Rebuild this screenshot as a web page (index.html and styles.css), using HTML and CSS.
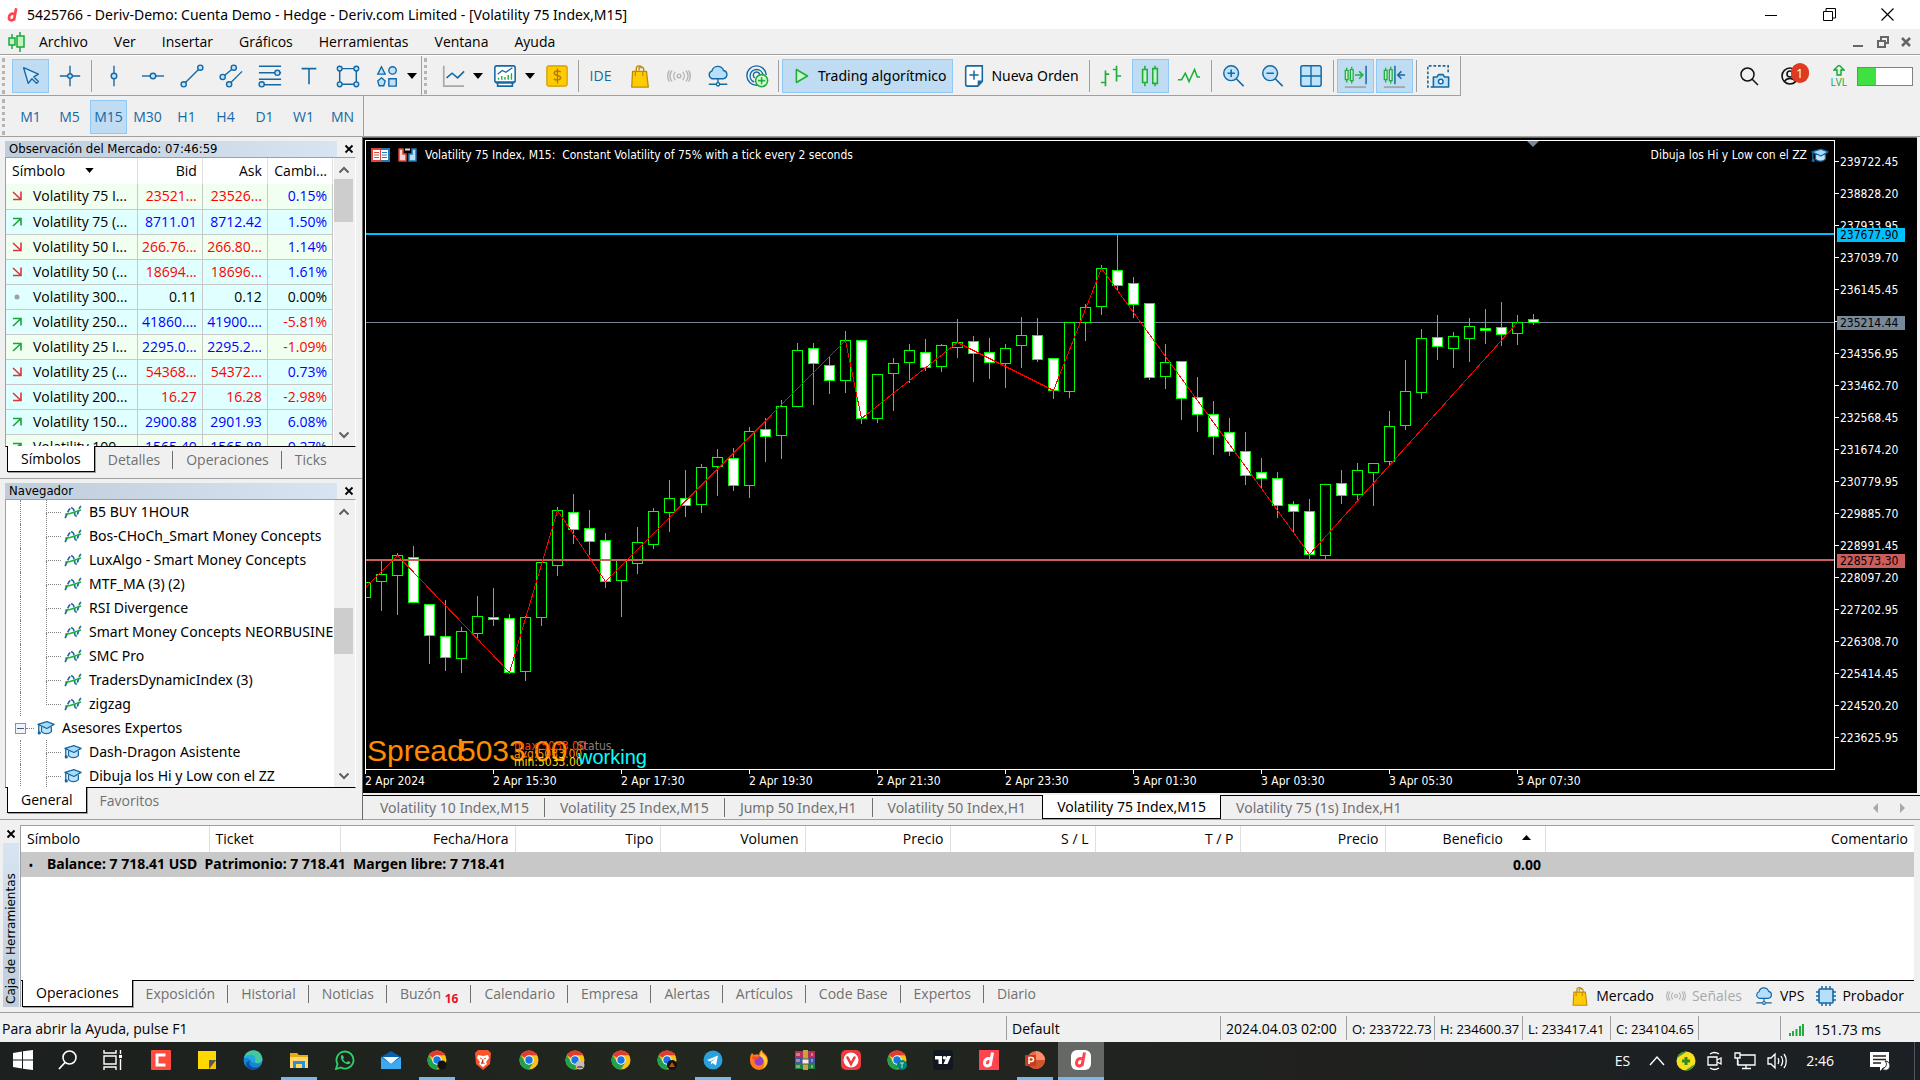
FILE: index.html
```html
<!DOCTYPE html>
<html lang="es">
<head>
    <meta charset="UTF-8">
    <meta name="viewport" content="width=device-width, initial-scale=1.0">
    <title>5425766 - Deriv-Demo: Cuenta Demo - Hedge - Deriv.com Limited</title>
    <link rel="stylesheet" href="styles.css">
</head>
<body>
    <!-- shared icons -->
    <svg class="defs" width="0" height="0" aria-hidden="true">
        <symbol id="up" viewBox="0 0 10 10"><path d="M1 1.5h8v7M9 1.5L1 9" fill="none" stroke="#17a63a" stroke-width="1.6"/></symbol>
        <symbol id="down" viewBox="0 0 10 10"><path d="M1 8.5h8v-8M1 1l8 7.5" fill="none" stroke="#d9383a" stroke-width="1.6"/></symbol>
        <symbol id="flat" viewBox="0 0 10 10"><circle cx="5" cy="5" r="2.5" fill="#a0a0a0"/></symbol>
        <symbol id="caret" viewBox="0 0 10 6"><path d="M0 0h10L5 6z" fill="#000"/></symbol>
        <symbol id="close" viewBox="0 0 10 10"><path d="M1.5 1.5l7 7M8.5 1.5l-7 7" stroke="#000" stroke-width="1.8"/></symbol>
        <symbol id="chev-up" viewBox="0 0 12 8"><path d="M1.5 6.5L6 2l4.500 4.500" fill="none" stroke="#606060" stroke-width="2"/></symbol>
        <symbol id="chev-down" viewBox="0 0 12 8"><path d="M1.500 1.500L6 6l4.500-4.500" fill="none" stroke="#606060" stroke-width="2"/></symbol>
        <symbol id="wave" viewBox="0 0 18 14">
            <path d="M1 13C4 8 5 2 8 3s2 8 4 8 2-7 5-10" fill="none" stroke="#1c6aa8" stroke-width="1.700" stroke-dasharray="5 1"/>
            <path d="M1 9.500l5-1 5-1.500 6-2" fill="none" stroke="#1fae3c" stroke-width="1.600"/>
        </symbol>
        <symbol id="cap" viewBox="0 0 20 16">
            <path d="M5 7v5c3 3 8 3 11 0V7" fill="#bfe3fa" stroke="#1468a4" stroke-width="1.400"/>
            <path d="M1 4l10-3 8 3-8 4.500z" fill="#a8dbfa" stroke="#1468a4" stroke-width="1.400" stroke-linejoin="round"/>
            <path d="M2 4.500V13" stroke="#1468a4" stroke-width="1.500"/><circle cx="2.500" cy="13.500" r="1.800" fill="#1468a4"/>
        </symbol>
        <symbol id="bag" viewBox="0 0 26 26">
            <path d="M9 12V5a3 3 0 0 1 6 0M12 7V4a3 3 0 0 1 5 1v7" fill="none" stroke="#c48a00" stroke-width="1.500"/>
            <path d="M5 8h15l2 17H4z" fill="#ffcb05" stroke="#c48a00" stroke-width="1.400" stroke-linejoin="round"/>
            <path d="M8 8v5M16 8v5" stroke="#c48a00" stroke-width="1.300"/>
        </symbol>
        <symbol id="signal" viewBox="0 0 26 26">
            <g fill="none" stroke="#b4b4b4" stroke-width="1.500"><circle cx="13" cy="13" r="2"/><path d="M9 8.500a7 7 0 0 0 0 9M17 8.500a7 7 0 0 1 0 9M5.500 7a9 9 0 0 0 0 12M20.500 7a9 9 0 0 1 0 12M2.500 7a12 12 0 0 0 0 12M23.500 7a12 12 0 0 1 0 12"/></g>
        </symbol>
        <symbol id="cloud" viewBox="0 0 26 26">
            <path d="M6.500 16a4.500 4.500 0 0 1 0-8.500 6.500 6.500 0 0 1 12.500-.5A4.600 4.600 0 0 1 19 16z" fill="#b5dffa" stroke="#1468a4" stroke-width="1.500"/>
            <path d="M13 16v5M3 22h8M15 22h8" stroke="#1468a4" stroke-width="1.500"/><circle cx="13" cy="22" r="1.800" fill="#f0f0f0" stroke="#1468a4" stroke-width="1.500"/>
        </symbol>
        <symbol id="chrome" viewBox="0 0 20 20">
            <circle cx="10" cy="10" r="9.500" fill="#fbc116"/>
            <path d="M10 10L1.800 5.200A9.500 9.500 0 0 1 18.200 5.200H10z" fill="#e33b2e"/>
            <path d="M1.800 5.200A9.500 9.500 0 0 0 10 19.500l4.100-7.100L10 10 6 12z" fill="#21a050"/>
            <circle cx="10" cy="10" r="4.700" fill="#fff"/><circle cx="10" cy="10" r="3.700" fill="#1a73e8"/>
        </symbol>
        <symbol id="deriv" viewBox="0 0 20 20">
            <path d="M13.500 2.500L11 16M11.500 9C8 7.500 5.500 10 5.500 13s3.500 4 5.500 1.500" fill="none" stroke="currentColor" stroke-width="3"/>
        </symbol>
    </svg>

    <header class="titlebar">
        <svg class="app-logo" width="18" height="18"><use href="#deriv"/></svg>
        <h1>5425766 - Deriv-Demo: Cuenta Demo - Hedge - Deriv.com Limited - [Volatility 75 Index,M15]</h1>
        <button class="win" aria-label="Minimizar"><svg width="12" height="12"><path d="M0 6.500h12" stroke="#000"/></svg></button>
        <button class="win" aria-label="Restaurar"><svg width="13" height="13"><path d="M.5 3.500h9v9h-9zM3 3V.5h9.500V10H10" fill="none" stroke="#000"/></svg></button>
        <button class="win" aria-label="Cerrar"><svg width="13" height="13"><path d="M.5.5l12 12M12.500.5l-12 12" stroke="#000" stroke-width="1.200"/></svg></button>
    </header>

    <nav class="menubar">
        <svg class="menu-logo" width="18" height="20"><g fill="#bff5c0" stroke="#1ba83a" stroke-width="1.500"><path d="M5 2v15M13 0v20"/><path d="M2 6h6v7H2zM10 4h7v11h-7z"/></g></svg>
        <button>Archivo</button><button>Ver</button><button>Insertar</button><button>Gráficos</button><button>Herramientas</button><button>Ventana</button><button>Ayuda</button>
        <span class="grow"></span>
        <button class="mdi" aria-label="Minimizar gráfico"><svg width="10" height="12"><path d="M0 10h10" stroke="#666" stroke-width="2"/></svg></button>
        <button class="mdi" aria-label="Restaurar gráfico"><svg width="12" height="12"><path d="M1 5h7v6H1zM4 4V1h7v6H8" fill="none" stroke="#666" stroke-width="2"/></svg></button>
        <button class="mdi" aria-label="Cerrar gráfico"><svg width="10" height="10"><path d="M1 1l8 8M9 1L1 9" stroke="#666" stroke-width="2.500"/></svg></button>
    </nav>

    <div class="toolbar">
        <div class="tools">
            <span class="grip"></span>
            <button class="tool on" aria-label="Cursor"><svg viewBox="0 0 26 26"><path d="M5 4l5 17 4-5 5 5 2-2-5-5 5-3z" fill="#cfe9fb" stroke="#1468a4" stroke-width="1.500" stroke-linejoin="round"/></svg></button>
            <button class="tool" aria-label="Cruz"><svg viewBox="0 0 26 26"><path d="M13 2v22M2 13h22" stroke="#1468a4" stroke-width="1.500"/><circle cx="13" cy="13" r="2.500" fill="#bfe3fa" stroke="#1468a4" stroke-width="1.500"/></svg></button>
            <i class="sep"></i>
            <button class="tool" aria-label="Línea vertical"><svg viewBox="0 0 26 26"><path d="M13 2v22" stroke="#1468a4" stroke-width="1.500"/><circle cx="13" cy="13" r="3" fill="#bfe3fa" stroke="#1468a4" stroke-width="1.500"/></svg></button>
            <button class="tool" aria-label="Línea horizontal"><svg viewBox="0 0 26 26"><path d="M1 13h24" stroke="#1468a4" stroke-width="1.500"/><circle cx="13" cy="13" r="3" fill="#bfe3fa" stroke="#1468a4" stroke-width="1.500"/></svg></button>
            <button class="tool" aria-label="Línea de tendencia"><svg viewBox="0 0 26 26"><path d="M4 22L22 4" stroke="#1468a4" stroke-width="1.500"/><g fill="#bfe3fa" stroke="#1468a4" stroke-width="1.500"><circle cx="4" cy="22" r="2.800"/><circle cx="22" cy="4" r="2.800"/></g></svg></button>
            <button class="tool" aria-label="Canal"><svg viewBox="0 0 26 26"><path d="M4 14L16 4M11 22L25 8" stroke="#1468a4" stroke-width="1.500"/><g fill="#bfe3fa" stroke="#1468a4" stroke-width="1.500"><circle cx="4" cy="14" r="2.800"/><circle cx="16" cy="4" r="2.800"/><circle cx="11" cy="22" r="2.800"/></g></svg></button>
            <button class="tool" aria-label="Fibonacci"><svg viewBox="0 0 26 26"><path d="M1 2.500h24M1 9.500h24M1 16.500h24M1 22.500h24" stroke="#1468a4" stroke-width="1.500"/><g fill="#bfe3fa" stroke="#1468a4" stroke-width="1.500"><circle cx="21" cy="9.500" r="2.800"/><circle cx="4" cy="22" r="2.800"/></g></svg></button>
            <button class="tool" aria-label="Texto"><svg viewBox="0 0 26 26"><path d="M5 5h16M13 5v17" stroke="#1468a4" stroke-width="1.700"/></svg></button>
            <button class="tool" aria-label="Rectángulo"><svg viewBox="0 0 26 26"><path d="M4 5h18v17H4z" fill="none" stroke="#1468a4" stroke-width="1.600"/><g fill="#bfe3fa" stroke="#1468a4" stroke-width="1.500"><circle cx="4" cy="5" r="2.600"/><circle cx="22" cy="5" r="2.600"/><circle cx="4" cy="22" r="2.600"/><circle cx="22" cy="22" r="2.600"/></g></svg></button>
            <button class="tool" aria-label="Objetos"><svg viewBox="0 0 26 26"><g fill="#bfe3fa" stroke="#1468a4" stroke-width="1.500"><path d="M7 3l4 8H3zM7 15l4 3.500-1.500 5h-5L3 18.500z"/><circle cx="19" cy="7" r="4"/><path d="M15 16h8v8h-8z"/></g></svg></button>
            <button class="drop" aria-label="Más objetos"><svg width="10" height="6"><use href="#caret"/></svg></button>
        </div>
        <div class="tools">
            <span class="grip"></span>
            <button class="tool" aria-label="Gráfico nuevo"><svg viewBox="0 0 26 26"><path d="M3 2v22h22" fill="none" stroke="#a8a8a8" stroke-width="1.800"/><path d="M6 15l6-5 6 5 7-7" fill="none" stroke="#1468a4" stroke-width="1.700"/></svg></button>
            <button class="drop" aria-label="Lista de gráficos"><svg width="10" height="6"><use href="#caret"/></svg></button>
            <button class="tool" aria-label="Plantillas"><svg viewBox="0 0 26 26"><path d="M5 20v4h16v-4" fill="#fff" stroke="#1468a4" stroke-width="1.700"/><rect x="2" y="2" width="22" height="18" rx="2" fill="#fff" stroke="#1468a4" stroke-width="1.700"/><path d="M3 20h20" stroke="#1468a4" stroke-width="2.500"/><path d="M5 11l5-4 4 2 7-5" fill="none" stroke="#1468a4" stroke-width="1.400"/><path d="M6 17v-2M9.500 17v-4M13 17v-3M16.500 17v-5M20 17v-7" stroke="#1fae3c" stroke-width="1.500"/></svg></button>
            <button class="drop" aria-label="Lista de plantillas"><svg width="10" height="6"><use href="#caret"/></svg></button>
            <button class="tool" aria-label="Depósito"><svg viewBox="0 0 26 26"><rect x="2" y="2" width="22" height="22" rx="2" fill="#ffcb05" stroke="#d19a00" stroke-width="1.300"/><path d="M17 9c-1-2-7-2-7 1s7 2 7 5-6 3-7.500 1M13.500 5v16" fill="none" stroke="#b77d00" stroke-width="1.500"/></svg></button>
            <i class="sep"></i>
            <button class="tool ide">IDE</button>
            <button class="tool" aria-label="Mercado"><svg viewBox="0 0 26 26"><use href="#bag"/></svg></button>
            <button class="tool" aria-label="Señales"><svg viewBox="0 0 26 26"><use href="#signal"/></svg></button>
            <button class="tool" aria-label="VPS"><svg viewBox="0 0 26 26"><use href="#cloud"/></svg></button>
            <button class="tool" aria-label="Copiar"><svg viewBox="0 0 26 26"><g fill="none" stroke="#1468a4" stroke-width="1.500"><path d="M13 23A10.500 10.500 0 1 1 23 12"/><path d="M10 19.500A7 7 0 1 1 19.500 12M10.500 15A3.500 3.500 0 1 1 16 12"/></g><circle cx="18" cy="18" r="6.500" fill="#dcffdc" stroke="#1fae3c" stroke-width="1.700"/><path d="M18 14v8M14 18h8" stroke="#1fae3c" stroke-width="1.700"/></svg></button>
            <i class="sep"></i>
            <button class="tool wide on"><svg viewBox="0 0 26 26"><path d="M8 6l12 7-12 7z" fill="#c8f7cd" stroke="#1fae3c" stroke-width="1.700" stroke-linejoin="round"/></svg>Trading algorítmico</button>
            <button class="tool wide"><svg viewBox="0 0 26 26"><path d="M6 2h16v17l-5 5H6a2 2 0 0 1-2-2V4a2 2 0 0 1 2-2z" fill="#fff" stroke="#1468a4" stroke-width="1.700"/><path d="M22 18h-5v6z" fill="#1468a4"/><path d="M13 7v10M8 12h10" stroke="#1468a4" stroke-width="1.600"/></svg>Nueva Orden</button>
            <i class="sep"></i>
            <button class="tool" aria-label="Barras"><svg viewBox="0 0 26 26"><path d="M7 7v17M2 20h5M7 11h4M19 2v17M15 6h4M19 13h5" stroke="#1fae3c" stroke-width="1.800"/></svg></button>
            <button class="tool on" aria-label="Velas"><svg viewBox="0 0 26 26"><path d="M7.500 2v22M18.500 2v22" stroke="#1fae3c" stroke-width="1.700"/><path d="M5 6h5v14H5zM16 5h5v16h-5z" fill="#c8f7cd" stroke="#1fae3c" stroke-width="1.700"/></svg></button>
            <button class="tool" aria-label="Línea"><svg viewBox="0 0 26 26"><path d="M1 17h4l4-7 4 9 6-13 3 8h3" fill="none" stroke="#1fae3c" stroke-width="1.700"/></svg></button>
            <i class="sep"></i>
            <button class="tool" aria-label="Acercar"><svg viewBox="0 0 26 26"><circle cx="11" cy="10" r="8" fill="#bfe3fa" stroke="#1468a4" stroke-width="1.600"/><path d="M16.500 16l8 8M7 10h8M11 6v8" stroke="#1468a4" stroke-width="1.700"/></svg></button>
            <button class="tool" aria-label="Alejar"><svg viewBox="0 0 26 26"><circle cx="11" cy="10" r="8" fill="#bfe3fa" stroke="#1468a4" stroke-width="1.600"/><path d="M16.500 16l8 8M7 10h8" stroke="#1468a4" stroke-width="1.700"/></svg></button>
            <button class="tool" aria-label="Mosaico"><svg viewBox="0 0 26 26"><rect x="2" y="2" width="22" height="22" rx="2" fill="#bfe3fa" stroke="#1468a4" stroke-width="1.600"/><path d="M13 2v22M2 13h22" stroke="#1468a4" stroke-width="1.500"/></svg></button>
            <i class="sep"></i>
            <button class="tool on" aria-label="Desplazar al final"><svg viewBox="0 0 26 26"><path d="M4 4v16M9.500 3v18" stroke="#1fae3c" stroke-width="1.400"/><path d="M2.500 7h3v10h-3zM8 6h3v12H8z" fill="#c8f7cd" stroke="#1fae3c" stroke-width="1.400"/><path d="M13 12h8M17.500 8l4 4-4 4" fill="none" stroke="#1fae3c" stroke-width="1.600"/><path d="M25 2v20" stroke="#1468a4" stroke-width="1.600"/><path d="M2 25h23" stroke="#999" stroke-width="1.500"/></svg></button>
            <button class="tool on" aria-label="Desplazamiento"><svg viewBox="0 0 26 26"><path d="M4 4v16M9.500 3v18" stroke="#1fae3c" stroke-width="1.400"/><path d="M2.500 7h3v10h-3zM8 6h3v12H8z" fill="#c8f7cd" stroke="#1fae3c" stroke-width="1.400"/><path d="M14 2v20M17 12h8M21 8l-4 4 4 4" fill="none" stroke="#1468a4" stroke-width="1.600"/><path d="M2 25h23" stroke="#999" stroke-width="1.500"/></svg></button>
            <i class="sep"></i>
            <button class="tool" aria-label="Captura"><svg viewBox="0 0 26 26"><path d="M8 25H2V2h22v9" fill="none" stroke="#1468a4" stroke-width="1.700" stroke-dasharray="3 2"/><path d="M8 14h4l1.500-2.500h5L20 14h4.500v11H8z" fill="#bfe3fa" stroke="#1468a4" stroke-width="1.700" stroke-linejoin="round"/><circle cx="16" cy="19" r="2.500" fill="#fff" stroke="#1468a4" stroke-width="1.600"/></svg></button>
        </div>
        <span class="grow"></span>
        <div class="account">
            <button aria-label="Buscar"><svg width="20" height="20"><circle cx="8.500" cy="8.500" r="6.500" fill="none" stroke="#111" stroke-width="1.500"/><path d="M13 13l6 6" stroke="#111" stroke-width="1.500"/></svg></button>
            <button class="profile" aria-label="Perfil"><svg width="18" height="18"><g fill="none" stroke="#111" stroke-width="1.600"><circle cx="9" cy="9" r="8"/><circle cx="9" cy="7" r="3"/><path d="M3.500 14.500c2-4 9-4 11 0"/></g></svg><b>1</b></button>
            <button class="lvl"><svg width="12" height="11"><path d="M6 0l5 5H8v5H4V5H1z" fill="#dff8df" stroke="#12a534" stroke-width="1.400"/></svg>LVL</button>
            <div class="battery"><i></i></div>
        </div>
    </div>

    <div class="timeframes">
        <div class="tools">
            <span class="grip"></span>
            <button class="tool">M1</button><button class="tool">M5</button><button class="tool on">M15</button><button class="tool">M30</button><button class="tool">H1</button><button class="tool">H4</button><button class="tool">D1</button><button class="tool">W1</button><button class="tool">MN</button>
        </div>
    </div>

    <main class="workspace">
        <aside class="side">
            <section class="panel watch">
                <div class="panel-title"><h2>Observación del Mercado: 07:46:59</h2><button aria-label="Cerrar"><svg width="10" height="10"><use href="#close"/></svg></button></div>
                <div class="panel-body">
                    <div class="view">
                        <table class="symbols">
                            <thead><tr><th>Símbolo <svg width="9" height="5"><use href="#caret"/></svg></th><th>Bid</th><th>Ask</th><th>Cambi...</th></tr></thead>
                            <tbody>
                                <tr class="odd"><td><svg><use href="#down"/></svg>Volatility 75 I...</td><td class="r">23521...</td><td class="r">23526...</td><td class="b">0.15%</td></tr>
                                <tr><td><svg><use href="#up"/></svg>Volatility 75 (...</td><td class="b">8711.01</td><td class="b">8712.42</td><td class="b">1.50%</td></tr>
                                <tr class="odd"><td><svg><use href="#down"/></svg>Volatility 50 I...</td><td class="r">266.76...</td><td class="r">266.80...</td><td class="b">1.14%</td></tr>
                                <tr><td><svg><use href="#down"/></svg>Volatility 50 (...</td><td class="r">18694...</td><td class="r">18696...</td><td class="b">1.61%</td></tr>
                                <tr><td><svg><use href="#flat"/></svg>Volatility 300...</td><td>0.11</td><td>0.12</td><td>0.00%</td></tr>
                                <tr><td><svg><use href="#up"/></svg>Volatility 250...</td><td class="b">41860....</td><td class="b">41900....</td><td class="r">-5.81%</td></tr>
                                <tr class="odd"><td><svg><use href="#up"/></svg>Volatility 25 I...</td><td class="b">2295.0...</td><td class="b">2295.2...</td><td class="r">-1.09%</td></tr>
                                <tr><td><svg><use href="#down"/></svg>Volatility 25 (...</td><td class="r">54368...</td><td class="r">54372...</td><td class="b">0.73%</td></tr>
                                <tr><td><svg><use href="#down"/></svg>Volatility 200...</td><td class="r">16.27</td><td class="r">16.28</td><td class="r">-2.98%</td></tr>
                                <tr><td><svg><use href="#up"/></svg>Volatility 150...</td><td class="b">2900.88</td><td class="b">2901.93</td><td class="b">6.08%</td></tr>
                                <tr class="odd"><td><svg><use href="#up"/></svg>Volatility 100...</td><td class="b">1565.40</td><td class="b">1565.88</td><td class="b">0.27%</td></tr>
                            </tbody>
                        </table>
                    </div>
                    <div class="scroll"><svg width="12" height="8"><use href="#chev-up"/></svg><i></i><svg width="12" height="8"><use href="#chev-down"/></svg></div>
                </div>
                <div class="tabs"><button class="active">Símbolos</button><button>Detalles</button><button>Operaciones</button><button>Ticks</button></div>
            </section>

            <section class="panel nav">
                <div class="panel-title"><h2>Navegador</h2><button aria-label="Cerrar"><svg width="10" height="10"><use href="#close"/></svg></button></div>
                <div class="panel-body">
                    <div class="view">
                        <ul class="tree">
                            <li><i class="branch"></i><svg><use href="#wave"/></svg>B5 BUY 1HOUR</li>
                            <li><i class="branch"></i><svg><use href="#wave"/></svg>Bos-CHoCh_Smart Money Concepts</li>
                            <li><i class="branch"></i><svg><use href="#wave"/></svg>LuxAlgo - Smart Money Concepts</li>
                            <li><i class="branch"></i><svg><use href="#wave"/></svg>MTF_MA (3) (2)</li>
                            <li><i class="branch"></i><svg><use href="#wave"/></svg>RSI Divergence</li>
                            <li><i class="branch"></i><svg><use href="#wave"/></svg>Smart Money Concepts NEORBUSINE</li>
                            <li><i class="branch"></i><svg><use href="#wave"/></svg>SMC Pro</li>
                            <li><i class="branch"></i><svg><use href="#wave"/></svg>TradersDynamicIndex (3)</li>
                            <li><i class="branch end"></i><svg><use href="#wave"/></svg>zigzag</li>
                            <li class="folder"><button aria-label="Contraer"></button><i class="dash"></i><svg><use href="#cap"/></svg>Asesores Expertos</li>
                            <li><i class="branch"></i><svg><use href="#cap"/></svg>Dash-Dragon Asistente</li>
                            <li><i class="branch"></i><svg><use href="#cap"/></svg>Dibuja los Hi y Low con el ZZ</li>
                        </ul>
                    </div>
                    <div class="scroll"><svg width="12" height="8"><use href="#chev-up"/></svg><i></i><svg width="12" height="8"><use href="#chev-down"/></svg></div>
                </div>
                <div class="tabs"><button class="active">General</button><button>Favoritos</button></div>
            </section>
        </aside>

        <section class="charts">
            <div class="chart">
                <div class="plot">
                    <svg id="plot" width="100%" height="100%"></svg>
                    <div class="caption">
                        <svg width="19" height="14"><path d="M0 0h10v14H0z" fill="#e0453c"/><path d="M10 0h9v14h-9z" fill="#2277b8"/><path d="M2 2h7v10H2zM10 2h7v10h-7z" fill="#fff"/><path d="M3 4.500h5M3 7h5M3 9.500h5" stroke="#e0453c"/><path d="M11 4.500h5M11 7h5M11 9.500h5" stroke="#2277b8"/></svg>
                        <svg width="19" height="14"><path d="M1 1h4v5h3v7H1z" fill="#fbd3d0" stroke="#d9463c" stroke-width="1.500"/><path d="M18 1h-4v5h-3v7h7z" fill="#b5e0fa" stroke="#2277b8" stroke-width="1.500"/><path d="M7 1.500h5" stroke="#ddd" stroke-width="2"/></svg>
                        <span>Volatility 75 Index, M15:&nbsp; Constant Volatility of 75% with a tick every 2 seconds</span>
                        <span class="grow"></span>
                        <span>Dibuja los Hi y Low con el ZZ</span>
                        <svg width="18" height="15" viewBox="0 0 20 16"><use href="#cap"/></svg>
                    </div>
                </div>
                <div class="prices">
                    <span>239722.45</span><span>238828.20</span><span>237933.95</span><span>237039.70</span><span>236145.45</span><span>235251.20</span><span>234356.95</span><span>233462.70</span><span>232568.45</span><span>231674.20</span><span>230779.95</span><span>229885.70</span><span>228991.45</span><span>228097.20</span><span>227202.95</span><span>226308.70</span><span>225414.45</span><span>224520.20</span><span>223625.95</span>
                    <b class="tag high">237677.90</b><b class="tag last">235214.44</b><b class="tag low">228573.30</b>
                </div>
                <div class="times">
                    <span>2 Apr 2024</span><span>2 Apr 15:30</span><span>2 Apr 17:30</span><span>2 Apr 19:30</span><span>2 Apr 21:30</span><span>2 Apr 23:30</span><span>3 Apr 01:30</span><span>3 Apr 03:30</span><span>3 Apr 05:30</span><span>3 Apr 07:30</span>
                </div>
            </div>
            <div class="chart-tabs">
                <button>Volatility 10 Index,M15</button><button>Volatility 25 Index,M15</button><button>Jump 50 Index,H1</button><button class="before">Volatility 50 Index,H1</button><button class="active">Volatility 75 Index,M15</button><button class="before">Volatility 75 (1s) Index,H1</button>
                <span class="grow"></span>
                <svg width="32" height="10"><path d="M5 0v10L0 5zM27 0v10l5-5z" fill="#a8a8a8"/></svg>
            </div>
        </section>
    </main>

    <section class="toolbox">
        <div class="toolbox-title"><button aria-label="Cerrar"><svg width="10" height="10"><use href="#close"/></svg></button><h2>Caja de Herramientas</h2></div>
        <div class="toolbox-body">
            <table class="trades">
                <colgroup><col class="c188"><col class="c131"><col class="c175"><col class="c145"><col class="c145"><col class="c145"><col class="c145"><col class="c145"><col class="c145"><col class="c160"><col></colgroup>
                <thead><tr><th>Símbolo</th><th>Ticket</th><th>Fecha/Hora</th><th>Tipo</th><th>Volumen</th><th>Precio</th><th>S / L</th><th>T / P</th><th>Precio</th><th>Beneficio <svg width="9" height="5"><path d="M0 5h9L4.500 0z"/></svg></th><th>Comentario</th></tr></thead>
                <tbody><tr><td colspan="9"><i>•</i>Balance: 7 718.41 USD&nbsp; Patrimonio: 7 718.41&nbsp; Margen libre: 7 718.41</td><td>0.00</td><td></td></tr></tbody>
            </table>
            <div class="tabs">
                <button class="active">Operaciones</button><button>Exposición</button><button>Historial</button><button>Noticias</button><button>Buzón <sub>16</sub></button><button>Calendario</button><button>Empresa</button><button>Alertas</button><button>Artículos</button><button>Code Base</button><button>Expertos</button><button>Diario</button>
                <span class="grow"></span>
                <a href="#"><svg width="20" height="20"><use href="#bag"/></svg>Mercado</a>
                <a href="#" class="off"><svg width="20" height="20"><use href="#signal"/></svg>Señales</a>
                <a href="#"><svg width="20" height="20"><use href="#cloud"/></svg>VPS</a>
                <a href="#"><svg width="20" height="20"><path d="M6 0v20M10 0v20M14 0v20M0 6h20M0 10h20M0 14h20" stroke="#1468a4" stroke-width="1.500"/><rect x="3" y="3" width="14" height="14" rx="1" fill="#b5dffa" stroke="#1468a4" stroke-width="1.600"/></svg>Probador</a>
            </div>
        </div>
    </section>

    <footer class="status">
        <span class="grow">Para abrir la Ayuda, pulse F1</span>
        <span class="profile-name">Default</span>
        <span class="date">2024.04.03 02:00</span>
        <span class="ohlc">O: 233722.73</span>
        <span class="ohlc">H: 234600.37</span>
        <span class="ohlc">L: 233417.41</span>
        <span class="ohlc">C: 234104.65</span>
        <span class="blank"></span>
        <span class="ping"><svg width="16" height="12"><path d="M1 12V9M4 12V7M7.500 12V5M11 12V2M14 12V0" stroke="#1fae3c" stroke-width="2"/></svg>151.73 ms</span>
    </footer>

    <div class="taskbar">
        <button class="sys" aria-label="Inicio"><svg viewBox="0 0 20 20"><path d="M0 3l9-1.500V9.500H0zM10 1.300L20 0v9.500H10zM0 10.500h9v8L0 17zM10 10.500h10V20l-10-1.300z" fill="#fff"/></svg></button>
        <button class="sys" aria-label="Buscar"><svg viewBox="0 0 20 20"><circle cx="11.500" cy="7.500" r="6.500" fill="none" stroke="#fff" stroke-width="1.600"/><path d="M7 12.500L1 19" stroke="#fff" stroke-width="1.800"/></svg></button>
        <button class="sys" aria-label="Vista de tareas"><svg viewBox="0 0 20 20"><path d="M1 0v3h12V0M1 20v-3h12v3M1 6h12v8H1zM17.500 0v4M17.500 9v11" fill="none" stroke="#fff" stroke-width="1.400"/><path d="M16 5h3v3h-3z" fill="#fff"/></svg></button>
        <button aria-label="Camtasia"><svg viewBox="0 0 20 20"><rect width="20" height="20" rx="1" fill="#ff4a3d"/><path d="M14.500 5H6v10h8.500" fill="none" stroke="#fff" stroke-width="3"/></svg></button>
        <button aria-label="Notas"><svg viewBox="0 0 20 20"><path d="M1 1h18v9h-7v9H1z" fill="#ffd800"/><path d="M12 10h7l-7 9z" fill="#555"/><path d="M19 10v9h-7z" fill="#f5c400"/></svg></button>
        <button aria-label="Edge"><svg viewBox="0 0 20 20"><circle cx="10" cy="10" r="9.500" fill="#1686d4"/><path d="M1 8C3-2 18-3 19.500 9c0 5-7 5-8 3 2-4-2-7-6-5-2 1-4 1-4.500 1z" fill="#45c7a0"/><path d="M1 8C5 3 12 4 12.500 9c.3 1-1 2-1 3l-2 1c-2-4-5-6-8.500-5z" fill="#22a9e0"/><path d="M7 10c-3 6 4 10 10 6-3 6-14 5-14-3z" fill="#0c4f9e"/></svg></button>
        <button class="open" aria-label="Explorador"><svg viewBox="0 0 20 20"><path d="M1 3h7l2 2h9v12H1z" fill="#e8a911"/><path d="M1 7h18v11H1z" fill="#ffd868"/><path d="M4 18v-7h12v7h-3v-4H7v4z" fill="#2b8fe0"/></svg></button>
        <button aria-label="WhatsApp"><svg viewBox="0 0 20 20"><path d="M1 19l1.500-5A8.500 8.500 0 1 1 6 17.500z" fill="none" stroke="#2bd366" stroke-width="1.800"/><path d="M6 6c1-2 2-1 3 1.500L8 9c1 2 2 3 3.500 3.500L13 11c3 1 3 2 1 3-4 1-9-4-8-8z" fill="#2bd366"/></svg></button>
        <button aria-label="Correo"><svg viewBox="0 0 20 20"><path d="M0 7l10-6 10 6v12H0z" fill="#0c5ea8"/><path d="M2 7h16l-8 7z" fill="#fff"/><path d="M0 7l10 7 10-7v12H0z" fill="#3aa9f0"/><path d="M2 7h16l-8 6z" fill="#e8f4ff"/></svg></button>
        <button class="open" aria-label="Chrome 1"><svg viewBox="0 0 20 20"><use href="#chrome"/><circle cx="15" cy="15" r="4.500" fill="#111"/></svg></button>
        <button aria-label="Brave"><svg viewBox="0 0 20 20"><path d="M5 0h10l3 3-1 11-7 6-7-6L2 3z" fill="#fb542b"/><path d="M5 5l5 1 5-1 1 3-3 4 1 2-4 3-4-3 1-2-3-4z" fill="#fff"/><path d="M7 8l2 1M13 8l-2 1M10 9v4l-2 1M10 13l2 1" stroke="#fb542b"/></svg></button>
        <button aria-label="Chrome 2"><svg viewBox="0 0 20 20"><use href="#chrome"/></svg></button>
        <button aria-label="Chrome 3"><svg viewBox="0 0 20 20"><use href="#chrome"/><circle cx="15" cy="15" r="4.500" fill="#c9bdb8"/><path d="M11.500 18c1-3 6-3 7 0" fill="#76655f"/></svg></button>
        <button aria-label="Chrome 4"><svg viewBox="0 0 20 20"><use href="#chrome"/></svg></button>
        <button aria-label="Chrome 5"><svg viewBox="0 0 20 20"><use href="#chrome"/><circle cx="15" cy="15" r="5" fill="#111"/><path d="M12 17l3-5 3 5z" fill="#b3541e"/></svg></button>
        <button class="open" aria-label="Telegram"><svg viewBox="0 0 20 20"><circle cx="10" cy="10" r="9.500" fill="#2aa1dd"/><path d="M4 10l11-4.500-2 10-3.500-2.500-1.500 1.500V12l5-4-6 3.500z" fill="#fff"/></svg></button>
        <button aria-label="Firefox"><svg viewBox="0 0 20 20"><path d="M1 9c0-3 1-5 2-6l2 2c2-1 4-1 5 0 0-3 2-5 3-5 0 3 6 4 6 11a9 9 0 0 1-18 0z" fill="#ff7a1a"/><path d="M12 1c1 4 7 4 6 11 0 3-2 5-4 6 3-5 1-9-3-12z" fill="#ffd033"/><circle cx="10" cy="11" r="4.500" fill="#8a3fd0"/><path d="M3 7c3-2 5 0 8 1-2 0-3 1-5 2-2 0-3-1-3-3z" fill="#ff4a2e"/></svg></button>
        <button aria-label="WinRAR"><svg viewBox="0 0 20 20"><path d="M0 1h20v6H0z" fill="#b82d5c"/><path d="M0 7h20v6H0z" fill="#4254a8"/><path d="M0 13h20v6H0z" fill="#23804a"/><path d="M2 3v3M4 3v3M17 3v3M2 9v3M4 9v3M17 9v3M2 15v3M4 15v3M17 15v3" stroke="#e0d7a0"/><path d="M8 0h5v20H8z" fill="#caa13c"/><path d="M7 9h7v5H7z" fill="#eee" stroke="#555"/></svg></button>
        <button aria-label="Vivaldi"><svg viewBox="0 0 20 20"><rect width="20" height="20" rx="5" fill="#ee3b3f"/><circle cx="10" cy="10" r="7.500" fill="#fff"/><path d="M6.500 7.500L10 14l3.500-6.500" fill="none" stroke="#ee3b3f" stroke-width="2.600" stroke-linecap="round"/></svg></button>
        <button aria-label="Chrome 6"><svg viewBox="0 0 20 20"><use href="#chrome"/><circle cx="15" cy="15" r="5" fill="#00897b"/><path d="M13 13h4M15 13v5" stroke="#b5ded9"/></svg></button>
        <button aria-label="TradingView"><svg viewBox="0 0 20 20"><rect width="20" height="20" rx="3" fill="#131722"/><path d="M2 6h7v8H5.500V9.500H2zM14 6h4l-3.500 8h-4z" fill="#fff"/><circle cx="11.500" cy="7.800" r="1.800" fill="#fff"/></svg></button>
        <button class="red" aria-label="Deriv"><svg viewBox="0 0 20 20"><rect width="20" height="20" fill="#ff444f"/><use href="#deriv"/></svg></button>
        <button class="open" aria-label="PowerPoint"><svg viewBox="0 0 20 20"><circle cx="11" cy="10" r="9" fill="#ed6c47"/><path d="M11 1a9 9 0 0 1 9 9h-9z" fill="#ff8f6b"/><path d="M2 10h18a9 9 0 0 1-17 4z" fill="#d35230"/><rect y="5" width="11" height="11" rx="1" fill="#c43e1c"/><path d="M4 14V7.500h2.500a2 2 0 0 1 0 4H4" fill="none" stroke="#fff" stroke-width="1.500"/></svg></button>
        <button class="open current" aria-label="Deriv MT5"><svg viewBox="0 0 20 20"><rect width="20" height="20" rx="6" fill="#fff"/><use href="#deriv"/></svg></button>
        <span class="grow"></span>
        <div class="tray">
            <span class="lang">ES</span>
            <svg width="16" height="20"><path d="M1 14l7-8 7 8" fill="none" stroke="#fff" stroke-width="1.400"/></svg>
            <svg width="20" height="20"><circle cx="10" cy="10" r="9.500" fill="#f8df1e"/><path d="M1 7a9.500 9.500 0 0 1 10-6.500L7 3zM19 13a9.500 9.500 0 0 1-10 6.500l4-2.500z" fill="#2f9a2f"/><path d="M10 6v8M6 10h8" stroke="#2f8a1f" stroke-width="3"/></svg>
            <svg width="16" height="20"><path d="M1 6h9v8H1zM10 9l4-2v6l-4-2M3 3c3-2 6-2 9 0M3 17c3 2 6 2 9 0" fill="none" stroke="#fff" stroke-width="1.300"/></svg>
            <svg width="22" height="18"><path d="M6 3h15v10H4V8M12 13v3M8 16.500h9M1 1h5v5H1zM3.500 6v7" fill="none" stroke="#fff" stroke-width="1.300"/></svg>
            <svg width="22" height="18"><path d="M1 6h3l4-4v14l-4-4H1zM11 6c1 2 1 4 0 6M14 4c2 3 2 7 0 10M17 2c3 4 3 10 0 14" fill="none" stroke="#fff" stroke-width="1.300"/></svg>
            <span class="clock">2:46</span>
            <svg width="22" height="21"><path d="M1 1h19v15h-5l-4 4v-4H1z" fill="#fff"/><path d="M4 5h13M4 8.500h13M4 12h8" stroke="#222" stroke-width="1.400"/><path d="M16 10c3 3 1 7-3 8 4 3 8 0 8-3s-2-5-5-5z" fill="#fff" stroke="#222"/></svg>
        </div>
    </div>

    <script src="chart.js"></script>
</body>
</html>
```
FILE: styles.css
```css
* {
    box-sizing: border-box;
}

body {
    margin: 0;
    height: 100vh;
    display: flex;
    flex-direction: column;
    overflow: hidden;
    background-color: #f0f0f0;
    color: #000;
    font-family: "Open Sans", "Noto Sans", sans-serif;
    font-size: 14px;
    line-height: 20px;
}

button {
    margin: 0;
    padding: 0;
    border: none;
    background: none;
    color: inherit;
    font: inherit;
    white-space: nowrap;
}

svg {
    display: block;
    flex: none;
}

h1, h2 {
    margin: 0;
    font-size: inherit;
    font-weight: normal;
    white-space: nowrap;
}

a {
    color: inherit;
    text-decoration: none;
}

i {
    font-style: normal;
}

.defs {
    position: absolute;
}

.grow {
    flex: 1;
}

/* slightly wider face for these */
.titlebar,
.tree,
.tool.wide,
.chart-tabs,
.trades td {
    font-family: "Noto Sans", "Open Sans", sans-serif;
}

/* title and menu */
.titlebar {
    display: flex;
    align-items: center;
    flex: none;
    height: 29px;
    padding: 0 4px;
    background-color: #fff;
}

.titlebar h1 {
    flex: 1;
    margin-left: 5px;
}

.app-logo {
    color: #ff444f;
}

.win {
    width: 58px;
    height: 29px;
    display: flex;
    align-items: center;
    justify-content: center;
}

.menubar {
    display: flex;
    align-items: center;
    flex: none;
    height: 26px;
    padding: 0 1px 0 7px;
    border-bottom: 1px solid #a0a0a0;
}

.menu-logo {
    margin-right: 1px;
}

.menubar button {
    padding: 0 13px;
}

.menubar .mdi {
    padding: 0 6px;
    width: 24px;
}

/* toolbars */
.toolbar {
    display: flex;
    flex: none;
    height: 41px;
    border-top: 1px solid #fff;
}

.timeframes {
    display: flex;
    flex: none;
    height: 41px;
    border-bottom: 1px solid #a0a0a0;
}

.tools {
    display: flex;
    align-items: center;
    gap: 2px;
    padding: 0 3px 0 2px;
    border-right: 1px solid #a0a0a0;
    border-bottom: 1px solid #a0a0a0;
}

.timeframes .tools {
    border-bottom: none;
    padding: 2px 2px 0;
    color: #1468a4;
}

.grip {
    width: 3px;
    height: 36px;
    margin-right: 5px;
    border-left: 3px dotted #b4b4b4;
}

.tool {
    width: 37px;
    height: 34px;
    display: flex;
    align-items: center;
    justify-content: center;
    border: 1px solid transparent;
}

.tool svg {
    width: 24px;
    height: 26px;
}

.tool.on {
    background-color: #c0dcf3;
    border-color: #90c8f6;
}

.tool.ide {
    color: #1468a4;
}

.tool.wide {
    width: auto;
    padding: 0 6px;
    gap: 5px;
}

.drop {
    width: 11px;
}

.sep {
    width: 1px;
    height: 32px;
    margin: 0 1px;
    background-color: #a0a0a0;
}

.account {
    display: flex;
    align-items: center;
    gap: 22px;
    padding-right: 7px;
}

.profile {
    display: flex;
}

.profile b {
    width: 18px;
    height: 20px;
    margin: -4px 0 0 -8px;
    border-radius: 9px;
    background-color: #df3a22;
    color: #fff;
    font-size: 13px;
    font-weight: normal;
    text-align: center;
}

.lvl {
    display: flex;
    flex-direction: column;
    align-items: center;
    color: #12a534;
    font-size: 10px;
    line-height: 12px;
}

.battery {
    width: 56px;
    height: 19px;
    margin-left: -12px;
    border: 1px solid #808080;
    background-color: #fff;
}

.battery i {
    display: block;
    width: 34%;
    height: 100%;
    background-color: #40e040;
}

/* left panels */
.workspace {
    display: flex;
    flex: 1;
    min-height: 0;
}

.side {
    display: flex;
    flex-direction: column;
    width: 362px;
    flex: none;
}

.panel {
    display: flex;
    flex-direction: column;
    padding: 3px 6px 6px 5px;
    border-bottom: 1px solid #a0a0a0;
}

.watch {
    height: 342px;
    flex: none;
}

.nav {
    flex: 1;
    min-height: 0;
}

.panel-title {
    display: flex;
    align-items: center;
    flex: none;
    height: 17px;
    font-family: "DejaVu Sans Condensed", "DejaVu Sans", sans-serif;
    font-size: 13px;
}

.panel-title h2 {
    flex: 1;
    height: 16px;
    padding-left: 4px;
    line-height: 16px;
    background: linear-gradient(to right, #bfcddb, #d7e4f2);
}

.panel-title button {
    padding: 0 2px 0 7px;
}

.panel-body {
    display: flex;
    flex: 1;
    min-height: 0;
    padding-right: 2px;
    border: 1px solid #a0a0a0;
    border-right-color: #fff;
    border-bottom: 1px solid #000;
}

.view {
    flex: 1;
    min-width: 0;
    overflow: hidden;
    background-color: #fff;
}

.scroll {
    display: flex;
    flex-direction: column;
    align-items: center;
    width: 19px;
    padding: 8px 0 7px;
}

.scroll i {
    width: 19px;
    height: 43px;
    margin: 5px 0 auto;
    background-color: #cdcdcd;
}

.nav .scroll i {
    height: 46px;
    margin-top: 92px;
}

.symbols {
    width: 327px;
    table-layout: fixed;
    border-collapse: collapse;
}

.symbols th,
.symbols td {
    width: 65px;
    height: 25px;
    padding: 0 5px 0 0;
    border-right: 1px solid #c8c8c8;
    border-bottom: 1px solid #c8c8c8;
    font-weight: normal;
    text-align: right;
    white-space: nowrap;
    overflow: hidden;
}

.symbols th {
    height: 26px;
    border-bottom: none;
    border-right-color: #e0e0e0;
}

.symbols th:first-child,
.symbols td:first-child {
    width: 131px;
    padding-left: 6px;
    text-align: left;
}

.symbols th svg {
    display: inline-block;
    margin: 0 0 3px 16px;
}

.symbols td svg {
    display: inline-block;
    width: 10px;
    height: 10px;
    margin-right: 11px;
}

.symbols tbody tr {
    background-color: #e0ffff;
}

.symbols tbody tr.odd {
    background-color: #f0fff0;
}

.r {
    color: #f00;
}

.b {
    color: #00f;
}

.tabs {
    display: flex;
    flex: none;
    height: 25px;
    padding-left: 2px;
    color: #707070;
}

.tabs button {
    padding: 0 13px;
}

.tabs button + button::before {
    content: "";
    float: left;
    height: 18px;
    margin: 1px 12px 0 -14px;
    border-left: 1px solid #707070;
}

.tabs .active + button::before {
    border-color: transparent;
}

.tabs .active {
    margin-top: -1px;
    border: 1px solid #000;
    border-top: none;
    background-color: #fff;
    color: #000;
    box-shadow: 1px 1px 0 #a0a0a0;
}

.tree {
    margin: 0;
    padding: 0;
    list-style: none;
}

.tree li {
    display: flex;
    align-items: center;
    height: 24px;
    margin-left: 14px;
    padding-left: 25px;
    border-left: 1px dotted #808080;
    white-space: nowrap;
}

.tree svg {
    width: 18px;
    height: 16px;
    margin: 0 7px 0 3px;
}

.branch {
    flex: none;
    width: 15px;
}

.branch::before,
.branch::after {
    content: "";
    display: block;
    height: 12px;
    border-left: 1px dotted #808080;
}

.branch::before {
    border-bottom: 1px dotted #808080;
}

.branch.end::after {
    border-color: transparent;
}

.tree .folder {
    margin-left: 9px;
    padding: 0;
    border: none;
}

.folder button {
    width: 11px;
    height: 11px;
    border: 1px solid #909090;
    background: linear-gradient(#345f9e, #345f9e) center / 7px 1px no-repeat #f4f4f4;
}

.dash {
    width: 8px;
    border-top: 1px dotted #808080;
}

/* chart */
.charts {
    display: flex;
    flex-direction: column;
    flex: 1;
    min-width: 0;
    border-left: 1px solid #696969;
}

.chart {
    display: grid;
    grid-template-columns: 1fr 82px;
    grid-template-rows: 1fr 23px;
    flex: 1;
    min-height: 0;
    margin-right: 3px;
    padding: 2px 0 0 2px;
    border-top: 1px solid #696969;
    background-color: #000;
    color: #fff;
    font-family: "DejaVu Sans Condensed", "DejaVu Sans", sans-serif;
    font-size: 12px;
}

.plot {
    position: relative;
    border: 1px solid #fff;
    overflow: hidden;
}

.caption {
    position: absolute;
    top: 4px;
    left: 5px;
    right: 5px;
    display: flex;
    align-items: center;
    gap: 8px;
}

.caption svg:last-child {
    margin-left: -4px;
}

.prices {
    position: relative;
    display: flex;
    flex-direction: column;
    padding-top: 6px;
}

.prices span {
    height: 32px;
    line-height: 32px;
    white-space: nowrap;
}

.prices span::before {
    content: "";
    display: inline-block;
    width: 4px;
    height: 1px;
    margin: 0 1px 4px 0;
    background-color: #fff;
}

.tag {
    position: absolute;
    left: 2px;
    width: 68px;
    padding-left: 3px;
    line-height: 14px;
    font-weight: normal;
    color: #000;
}

.high {
    top: 88px;
    background-color: #00bfff;
}

.last {
    top: 176px;
    background-color: #778899;
}

.low {
    top: 414px;
    background-color: #cd5c5c;
}

.times {
    grid-column: 1 / 3;
    display: flex;
}

.times span {
    width: 128px;
    line-height: 14px;
}

.times span::before {
    content: "";
    display: block;
    width: 1px;
    height: 4px;
    background-color: #fff;
}

.plot text {
    fill: currentColor;
}

.chart-tabs {
    display: flex;
    align-items: center;
    flex: none;
    height: 25px;
    margin-top: 2px;
    padding: 0 15px 0 2px;
    border-top: 1px solid #000;
    border-bottom: 1px solid #a0a0a0;
    color: #707070;
}

.chart-tabs button {
    padding: 0 15px;
    line-height: 19px;
    border-right: 1px solid #707070;
}

.chart-tabs .before {
    border-color: transparent;
}

.chart-tabs .active {
    align-self: stretch;
    margin-top: -1px;
    padding: 0 14px;
    border: 1px solid #000;
    border-top: none;
    background-color: #fff;
    color: #000;
}

/* toolbox */
.toolbox {
    display: flex;
    flex: none;
    height: 193px;
    padding: 5px 6px 5px 3px;
    border-bottom: 1px solid #a0a0a0;
}

.toolbox-title {
    display: flex;
    flex-direction: column;
    width: 16px;
    margin-right: 1px;
    font-family: "DejaVu Sans", sans-serif;
    font-size: 12px;
}

.toolbox-title button {
    height: 18px;
    padding-left: 3px;
}

.toolbox-title h2 {
    flex: 1;
    padding-top: 3px;
    line-height: 16px;
    writing-mode: vertical-rl;
    transform: rotate(180deg);
    background: linear-gradient(to top, #d7e4f2, #bfcddb);
}

.toolbox-body {
    display: flex;
    flex-direction: column;
    flex: 1;
    min-width: 0;
    border-left: 1px solid #a0a0a0;
    border-top: 1px solid #a0a0a0;
    background-color: #fff;
}

.trades {
    width: 100%;
    table-layout: fixed;
    border-collapse: collapse;
    margin-bottom: auto;
}

.trades th {
    height: 26px;
    padding: 0 6px;
    border-right: 1px solid #e0e0e0;
    font-weight: normal;
    text-align: right;
}

.trades th:nth-child(-n+2) {
    text-align: left;
}

.trades th svg {
    display: inline-block;
    margin: 0 8px 4px 15px;
}

.trades th:last-child {
    border: none;
}

.c188 { width: 188px; }
.c131 { width: 131px; }
.c175 { width: 175px; }
.c145 { width: 145px; }
.c160 { width: 160px; }

.trades td {
    height: 25px;
    padding: 0 4px 0 8px;
    background-color: #c8c8c8;
    font-weight: bold;
    font-size: 14px;
    text-align: right;
}

.trades td:first-child {
    text-align: left;
}

.trades td i {
    display: inline-block;
    width: 18px;
    font-size: 10px;
}

.toolbox .tabs {
    height: 27px;
    padding: 0 10px 0 1px;
    border-top: 1px solid #000;
    background-color: #f0f0f0;
}

.tabs sub {
    color: #e81123;
    font-size: 12px;
    font-weight: bold;
    line-height: 12px;
}

.tabs a {
    display: flex;
    align-items: center;
    gap: 6px;
    margin-left: 12px;
    padding-top: 3px;
    color: #000;
}

.tabs a.off {
    color: #a8a8a8;
}

/* status line */
.status {
    display: flex;
    align-items: center;
    flex: none;
    height: 29px;
}

.status span {
    height: 24px;
    padding: 4px 0 0 5px;
    border-left: 1px solid #a0a0a0;
    line-height: 18px;
    white-space: nowrap;
    overflow: hidden;
}

.status .grow {
    padding-left: 2px;
    border: none;
}

.status .profile-name { width: 214px; }
.status .date { width: 126px; }
.status .ohlc { width: 88px; font-size: 13px; }
.status .blank { width: 82px; }

.status .ping {
    display: flex;
    align-items: center;
    gap: 9px;
    width: 140px;
    padding-left: 8px;
}

/* taskbar */
.taskbar {
    display: flex;
    flex: none;
    height: 38px;
    background: linear-gradient(to right, #1c201e, #22271f 40%, #20211f 70%, #1a2025);
    color: #fff;
}

.taskbar button {
    display: flex;
    align-items: center;
    justify-content: center;
    width: 46px;
    border-bottom: 3px solid transparent;
}

.taskbar button svg {
    width: 20px;
    height: 20px;
    margin-top: 1px;
}

.taskbar .sys {
    width: 45px;
}

.taskbar .sys:nth-child(3) {
    margin-right: 3px;
}

.taskbar .open::after {
    content: "";
    align-self: flex-end;
    width: 36px;
    height: 3px;
    margin: 0 -8px -3px -28px;
    background-color: #76b9ed;
}

.taskbar .current {
    background-color: #666866;
    border-bottom-color: #76b9ed;
    color: #ff444f;
}

.taskbar .current::after {
    display: none;
}

.tray {
    display: flex;
    align-items: center;
    gap: 11px;
    margin-right: 5px;
    padding-right: 23px;
    border-right: 1px solid #555;
}

.lang {
    margin-right: 8px;
}

.clock {
    margin: 0 24px 0 6px;
}
```
FILE: chart.js
```js
// [high, body top, body bottom, low, bearish], one candle every 16px
const candles = [
    [582, 582, 597, 597, 0], [561, 574, 581, 610, 0], [553, 555, 575, 614, 0], [546, 557, 602, 602, 1],
    [604, 604, 635, 663, 1], [600, 636, 657, 670, 1], [627, 631, 658, 672, 0], [596, 616, 633, 637, 0],
    [588, 617, 619, 625, 1], [614, 618, 672, 673, 1], [616, 617, 671, 680, 0], [562, 562, 617, 625, 0],
    [507, 510, 565, 575, 0], [494, 512, 529, 543, 1], [510, 528, 541, 554, 1], [533, 540, 581, 587, 1],
    [560, 560, 580, 616, 0], [527, 542, 563, 573, 0], [508, 511, 544, 548, 0], [480, 498, 512, 531, 0],
    [470, 498, 505, 516, 1], [464, 467, 504, 512, 0], [449, 457, 466, 495, 0], [448, 458, 485, 490, 1],
    [427, 431, 485, 497, 0], [418, 429, 436, 461, 1], [400, 406, 435, 458, 0], [343, 350, 406, 406, 0],
    [343, 348, 363, 404, 1], [356, 365, 380, 393, 1], [331, 340, 380, 392, 0], [340, 340, 418, 423, 1],
    [374, 374, 418, 422, 0], [358, 363, 373, 410, 0], [344, 350, 362, 382, 0], [339, 352, 367, 370, 1],
    [344, 345, 366, 371, 0], [319, 342, 347, 357, 0], [336, 341, 353, 381, 1], [338, 352, 362, 378, 1],
    [344, 348, 363, 387, 0], [317, 335, 345, 367, 0], [318, 335, 359, 361, 1], [358, 358, 390, 398, 1],
    [322, 322, 391, 397, 0], [304, 307, 322, 340, 0], [265, 268, 306, 314, 0], [235, 270, 285, 290, 1],
    [277, 283, 304, 317, 1], [303, 303, 377, 379, 1], [344, 362, 376, 388, 0], [361, 361, 398, 419, 1],
    [377, 397, 414, 431, 1], [401, 414, 436, 454, 1], [418, 432, 451, 455, 1], [432, 451, 475, 484, 1],
    [458, 472, 478, 488, 1], [472, 478, 505, 517, 1], [501, 504, 511, 531, 1], [499, 511, 554, 559, 1],
    [484, 484, 555, 558, 0], [470, 483, 495, 503, 1], [463, 470, 494, 500, 0], [463, 463, 472, 505, 0],
    [411, 426, 461, 464, 0], [360, 391, 425, 429, 0], [329, 338, 392, 398, 0], [315, 337, 346, 359, 1],
    [332, 336, 348, 367, 0], [318, 326, 338, 361, 0], [309, 328, 330, 343, 1], [302, 327, 334, 345, 1],
    [315, 322, 333, 344, 0], [314, 319, 322, 324, 1]
];

// candle index and level of every swing
const swings = [[0, 587], [2, 555], [9, 672], [12, 510], [15, 581], [30, 340], [31, 418],
    [37, 342], [43, 390], [46, 268], [59, 554], [72, 322]];

const top0 = 141;
const step = 16;

let out = '';
out += '<path d="M1161 0h12l-6 6z" fill="#778899"/>';
out += '<rect y="92" width="100%" height="2" fill="#00bfff"/>';
out += '<rect y="181" width="100%" height="1" fill="#778899"/>';

candles.forEach(([high, open, close, low, bear], i) => {
    const x = i * step - 0.5;
    out += `<path d="M${x} ${high - top0}V${open - top0}M${x} ${close - top0}V${low - top0 + 1}" stroke="#0f0"/>`;
    out += `<rect x="${x - 5}" y="${open - top0 + 0.5}" width="10" height="${close - open}" fill="${bear ? '#fff' : 'none'}" stroke="#0f0"/>`;
});

out += '<rect y="418" width="100%" height="2" fill="#cd5c5c"/>';
const points = swings.map(([i, y]) => `${i * step - 0.5},${y - top0 + 0.5}`).join(' ');
out += `<polyline points="${points}" fill="none" stroke="#f00" shape-rendering="crispEdges"/>`;

// spread indicator labels
const arial = 'font-family="Liberation Sans, Arial, sans-serif"';
out += `<g ${arial} font-size="30"><text x="1" y="620" color="#ff8c00">Spread</text><text x="93" y="620" color="#ff8c00">5033.00</text></g>`;
out += '<text x="148" y="609" color="#ff4500">max:5033.00</text>';
out += '<text x="148" y="617" color="#ff8c00">avg:5033.00</text>';
out += '<text x="148" y="625" color="#ffd700">min:5033.00</text>';
out += '<text x="211" y="609" color="#808080">Status</text>';
out += `<text x="212" y="623" color="#00ffff" font-size="20" ${arial}>working</text>`;

document.getElementById('plot').innerHTML = out;
```
